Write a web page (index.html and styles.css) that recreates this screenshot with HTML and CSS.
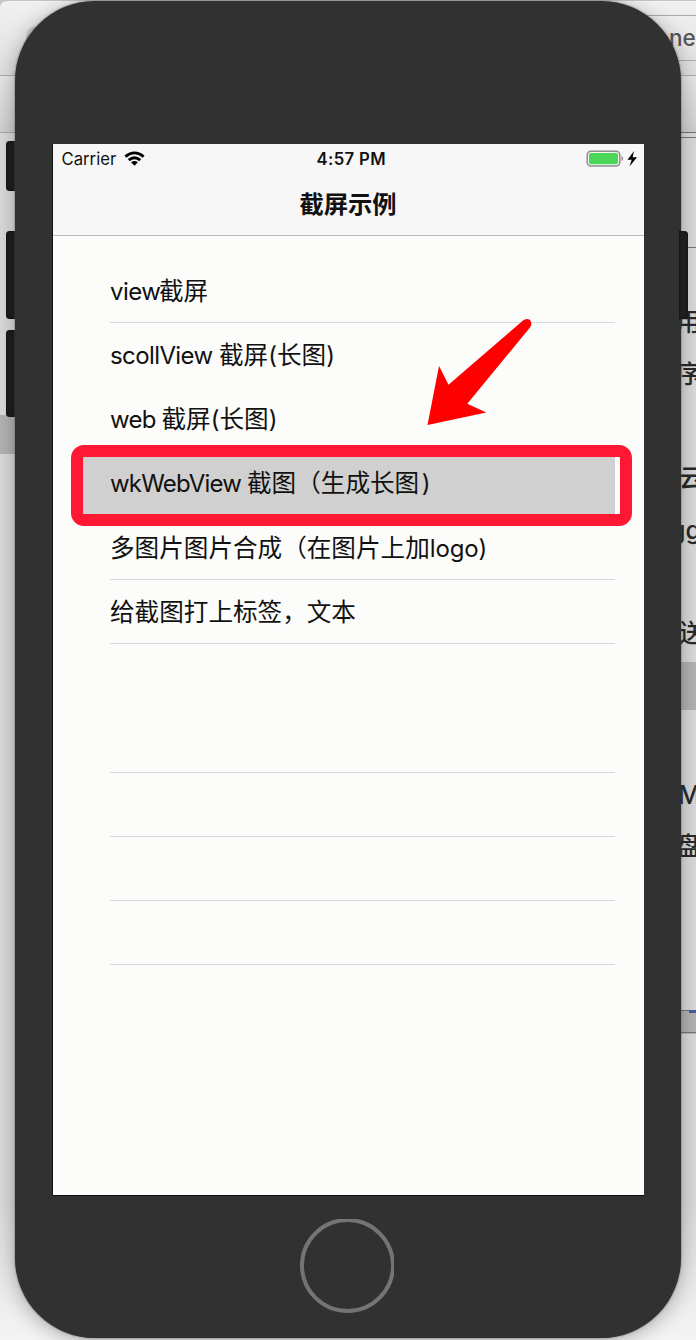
FILE: index.html
```html
<!DOCTYPE html>
<html lang="zh-CN">
<head>
<meta charset="utf-8">
<title>截屏示例</title>
<link rel="stylesheet" href="styles.css">
</head>
<body>
<main class="desktop">
  <svg class="backdrop" width="696" height="1340" viewBox="0 0 696 1340" aria-hidden="true">
    <defs>
      <linearGradient id="top" x2="0" y2="1"><stop stop-color="#f1f1f1"/><stop offset="1" stop-color="#dedede"/></linearGradient>
      <linearGradient id="bar" x2="0" y2="1"><stop stop-color="#e6e6e6"/><stop offset="1" stop-color="#cecece"/></linearGradient>
      <linearGradient id="low" x2="0" y2="1"><stop stop-color="#d9d9d9"/><stop offset="1" stop-color="#f4f4f4"/></linearGradient>
    </defs>
    <path fill="#c6c6c6" d="M0 0h696v12H0z"/>
    <path fill="url(#top)" d="M0 8Q0 1 8 1h688v74H0z"/>
    <rect x="26" y="26" width="60" height="34" rx="10" fill="#cdcdcd"/>
    <path fill="url(#bar)" d="M0 76h696v57H0z"/>
    <path fill="#dadada" d="M0 133h696v1067H0z"/>
    <path fill="url(#low)" d="M0 1200h696v140H0z"/>
    <path fill="#b3b3b3" d="M0 415h20v39H0zM676 662h20v48h-20zM676 1010h20v24h-20z"/>
    <path stroke="#aaa" fill="none" d="M0 75.5h696M0 132.5h696M630 15.5h66M640 60.5h56"/>
    <path stroke="#777" fill="none" d="M676 132.5h20M676 137.5h20M676 247.5h20M676 1010.5h20M676 1032.5h20"/>
    <path fill="#3f5d9f" d="M689 1010h7v3h-7z"/>
  </svg>
  <div class="behind">
    <span class="peek peek-one">ne</span>
    <span class="peek p1">用</span>
    <span class="peek p2">序</span>
    <span class="peek p3">云</span>
    <span class="peek p4">gg</span>
    <span class="peek p5">送</span>
    <span class="peek p6">M</span>
    <span class="peek p7">盘</span>
  </div>
  <i class="key mute"></i><i class="key up"></i><i class="key down"></i>
  <section class="phone">
    <div class="screen">
      <header class="nav">
        <div class="status">
          <div class="carrier"><span>Carrier</span>
            <svg width="22" height="16" viewBox="0 0 22 16"><g fill="none" stroke="#000" stroke-width="3"><path d="M1.4 5.5Q11-2.3 20.6 5.5"/><path d="M5 9.2Q11 4 17 9.2"/></g><path d="M7.4 11.4Q11 8.7 14.6 11.4L11 15z"/></svg>
          </div>
          <b class="time">4:57 PM</b>
          <svg class="power" width="52" height="18" viewBox="0 0 52 18"><rect x="1.2" y="1.2" width="32.6" height="14.8" rx="3.8" fill="#f8f8f8" stroke="#8d8f8d" stroke-width="1.5"/><rect x="3" y="3" width="29" height="11.3" rx="1.8" fill="#4cd658"/><path fill="#8b8b8b" d="M35.5 6q1.6.5 1.6 2.6t-1.6 2.7z"/><path d="M48 1L41.500 9.800h4.200l-2.200 6.700L51 7.300h-4.400z"/></svg>
        </div>
        <h1 class="title">截屏示例</h1>
      </header>
      <ul class="list">
        <li class="row lined"><span class="latin l1">view</span>截屏</li>
        <li class="row"><span class="latin l2">scollView</span>截屏<span class="latin">(</span>长图<span class="latin">)</span></li>
        <li class="row"><span class="latin l3">web</span>截屏<span class="latin">(</span>长图<span class="latin">)</span></li>
        <li class="row chosen"><span class="latin l4">wkWebView</span>截图（生成长图<span class="latin close">)</span></li>
        <li class="row lined">多图片图片合成（在图片上加<span class="latin l5">logo)</span></li>
        <li class="row lined">给截图打上标签，文本</li>
        <li class="row"></li>
        <li class="row lined"></li>
        <li class="row lined"></li>
        <li class="row lined"></li>
        <li class="row lined"></li>
      </ul>
    </div>
    <svg class="home" width="94" height="94" viewBox="0 0 94 94"><circle cx="47.5" cy="46.5" r="45.5" fill="none" stroke="#747474" stroke-width="4"/></svg>
  </section>
  <i class="key lock"></i>
  <div class="frame"></div>
  <svg class="arrow" width="110" height="112" viewBox="0 0 110 112"><path fill="#f00" d="M96 2.500Q99 0 102.500 1.500Q106 5 103 9.500L40.300 85.800L59.300 94.500L.5 107L12 48L21.500 66.800z"/></svg>
</main>
</body>
</html>
```
FILE: styles.css
```css
* { box-sizing: border-box; }
body { margin: 0; font-family: Inter, "Noto Sans CJK SC", sans-serif; color: #111; }
.desktop { position: relative; width: 696px; height: 1340px; padding: 1px 15px; overflow: hidden; }
.backdrop { position: absolute; inset: 0; }
.behind { position: absolute; inset: 0; color: #292929; font-size: 25px; font-weight: 500; line-height: 30px; }
.peek { position: absolute; left: 676px; white-space: nowrap; }
.peek-one { left: 669px; top: 23px; font-size: 22.5px; color: #555; }
.p1 { top: 307px; }
.p2 { top: 359px; }
.p3 { top: 463px; left: 679px; }
.p4 { top: 515px; left: 670px; }
.p5 { top: 618px; left: 679px; }
.p6 { top: 780px; left: 678px; }
.p7 { top: 831px; }

.phone { position: relative; width: 666px; height: 1337px; padding: 143px 37px 0 38px; border-radius: 80px; background: #313131; box-shadow: 0 0 2px #555, 0 3px 20px rgba(0, 0, 0, .3); }
.key { position: absolute; left: 6px; width: 14px; border-radius: 4px; background: #1d1e1e; box-shadow: inset 0 0 2px #000; }
.mute { top: 141px; height: 50px; }
.up { top: 231px; height: 88px; }
.down { top: 330px; height: 87px; }
.lock { left: 679px; top: 231px; width: 9px; height: 88px; border-radius: 0 4px 4px 0; }

.screen { width: 591px; height: 1051px; background: #fcfcfa; box-shadow: -1px 0 #111, 0 1px #0a0a0a; }
.nav { height: 92px; background: #f7f7f7; border-bottom: 1px solid #b9b9b9; }
.status { display: grid; grid-template-columns: 1fr auto 1fr; align-items: center; height: 30px; padding: 0 6px 0 8.500px; font-size: 16.700px; line-height: 30px; }
.carrier { display: flex; align-items: center; gap: 8px; }
.carrier svg { width: 21px; height: 16px; }
.time { font-weight: 600; letter-spacing: .35px; padding-left: 3px; }
.power { justify-self: end; }
.title { margin: 11px 0 0; font: 700 24.3px/36px "Noto Sans CJK SC", sans-serif; text-align: center; text-indent: -1px; }

.list { margin: 0; padding: 22.500px 29px 0 57px; list-style: none; }
.row { height: 64.250px; border-bottom: 1px solid transparent; font: 24.600px/60px "Noto Sans CJK SC", sans-serif; white-space: nowrap; }
.lined { border-bottom-color: #d7dadb; }
.latin { display: inline-block; font-family: Inter, sans-serif; font-size: 24px; }
.l1 { width: 49px; letter-spacing: -.5px; }
.l2 { width: 109px; letter-spacing: -.6px; }
.l3 { width: 51.500px; letter-spacing: -.7px; }
.l4 { width: 137px; letter-spacing: -.8px; }
.l5 { letter-spacing: -.1px; }
.close { margin-left: 2.500px; }
.chosen { margin-left: -27px; padding-left: 27px; background: #d0d0d0; }

.home { display: block; margin: 24px 0 0 247px; }
.frame { position: absolute; left: 71px; top: 445px; width: 561px; height: 81px; border: 12px solid #ff1833; border-radius: 13px; }
.arrow { position: absolute; left: 427px; top: 318px; }
```
